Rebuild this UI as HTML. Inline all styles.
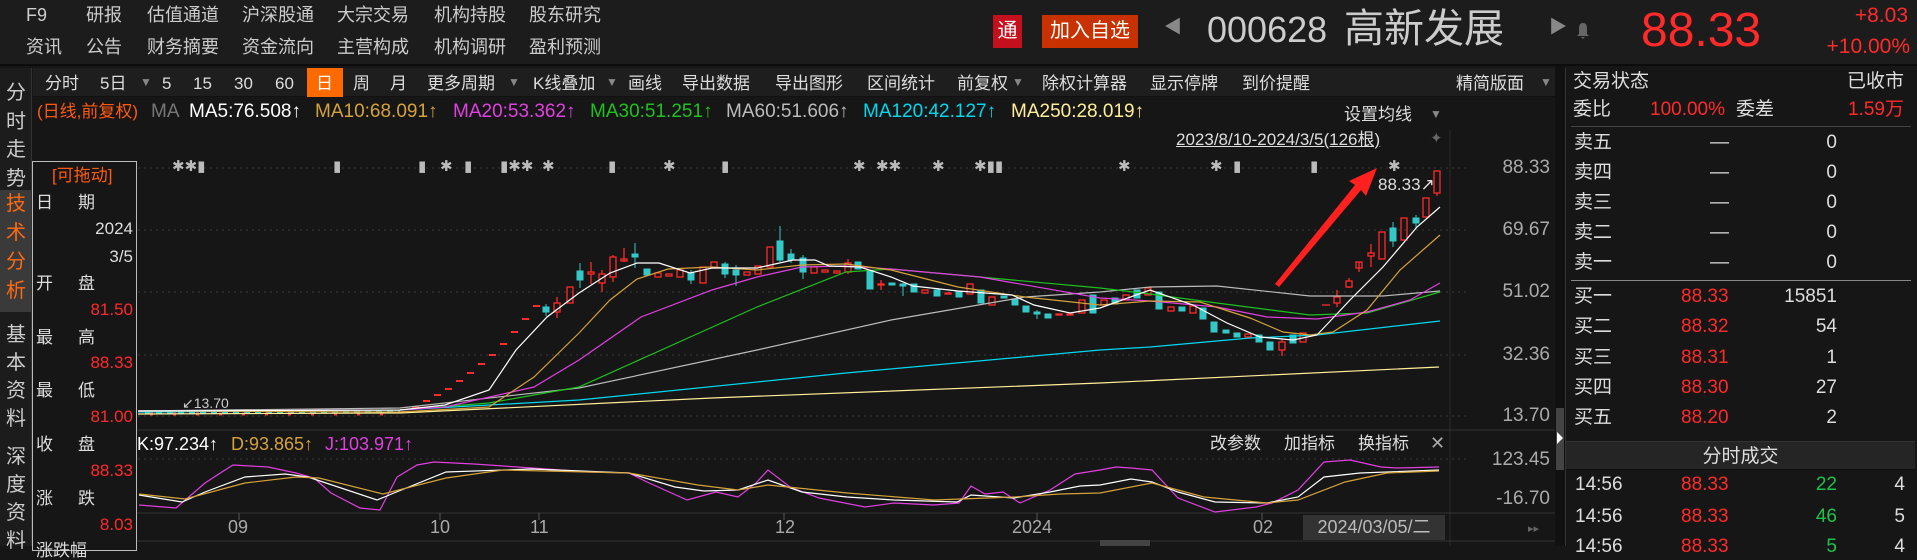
<!DOCTYPE html>
<html><head><meta charset="utf-8"><style>
*{margin:0;padding:0;box-sizing:border-box}
body{width:1917px;height:546px;background:#161616;overflow:hidden;position:relative;font-family:"Liberation Sans","Noto Sans CJK SC",sans-serif;color:#ddd}
.t{position:absolute;white-space:nowrap;line-height:1}
.r{color:#ff2a2a}.g{color:#1ec24a}.gr{color:#aaa}
svg{position:absolute;left:0;top:0}
.ma{font-size:19px;top:102px}
</style></head><body>
<!-- header -->
<div style="position:absolute;left:0;top:0;width:1917px;height:66px;background:#1c1c1c;border-bottom:2px solid #0c0c0c"></div>
<div class="t" style="left:26px;top:6px;font-size:18px;color:#ccc">F9</div>
<div class="t" style="left:86px;top:6px;font-size:18px;color:#ccc">研报</div>
<div class="t" style="left:147px;top:6px;font-size:18px;color:#ccc">估值通道</div>
<div class="t" style="left:242px;top:6px;font-size:18px;color:#ccc">沪深股通</div>
<div class="t" style="left:337px;top:6px;font-size:18px;color:#ccc">大宗交易</div>
<div class="t" style="left:434px;top:6px;font-size:18px;color:#ccc">机构持股</div>
<div class="t" style="left:529px;top:6px;font-size:18px;color:#ccc">股东研究</div>
<div class="t" style="left:26px;top:38px;font-size:18px;color:#ccc">资讯</div>
<div class="t" style="left:86px;top:38px;font-size:18px;color:#ccc">公告</div>
<div class="t" style="left:147px;top:38px;font-size:18px;color:#ccc">财务摘要</div>
<div class="t" style="left:242px;top:38px;font-size:18px;color:#ccc">资金流向</div>
<div class="t" style="left:337px;top:38px;font-size:18px;color:#ccc">主营构成</div>
<div class="t" style="left:434px;top:38px;font-size:18px;color:#ccc">机构调研</div>
<div class="t" style="left:529px;top:38px;font-size:18px;color:#ccc">盈利预测</div>
<div class="t" style="left:993px;top:15px;width:29px;height:33px;background:#c4101c;color:#fff;font-size:20px;line-height:33px;text-align:center">通</div>
<div class="t" style="left:1042px;top:15px;width:96px;height:33px;background:#c83200;color:#fff;font-size:20px;line-height:33px;text-align:center">加入自选</div>
<div class="t" style="left:1164px;top:18px;font-size:18px;color:#888">◀</div>
<div class="t" style="left:1207px;top:12px;font-size:36px;color:#ccc">000628</div>
<div class="t" style="left:1344px;top:9px;font-size:40px;color:#ccc">高新发展</div>
<div class="t" style="left:1549px;top:18px;font-size:18px;color:#888">▶</div>
<svg style="left:1576px;top:22px" width="14" height="18" viewBox="0 0 14 18"><path d="M7 1 C3 1 3 5 3 8 L3 12 L1 14 L13 14 L11 12 L11 8 C11 5 11 1 7 1Z M5 15 L9 15 L7 17Z" fill="#666"/></svg>
<div class="t r" style="left:1641px;top:7px;font-size:48px">88.33</div>
<div class="t r" style="left:1808px;top:5px;font-size:21px;width:100px;text-align:right">+8.03</div>
<div class="t r" style="left:1808px;top:36px;font-size:21px;width:102px;text-align:right">+10.00%</div>

<!-- sidebar -->
<div style="position:absolute;left:0;top:68px;width:32px;height:478px;background:#1c1c1c;border-right:1px solid #333"></div>
<div style="position:absolute;left:0;top:190px;width:31px;height:122px;background:#3a3a3a"></div>
<div class="t" style="left:6px;top:79px;font-size:20px;line-height:28.5px;width:20px;white-space:normal;color:#ccc">分时走势</div>
<div class="t" style="left:6px;top:190px;font-size:20px;line-height:29px;width:20px;white-space:normal;color:#ff6a10">技术分析</div>
<div class="t" style="left:6px;top:321px;font-size:20px;line-height:28px;width:20px;white-space:normal;color:#ccc">基本资料</div>
<div class="t" style="left:6px;top:443px;font-size:20px;line-height:28px;width:20px;white-space:normal;color:#ccc">深度资料</div>

<!-- toolbar -->
<div style="position:absolute;left:33px;top:68px;width:1522px;height:29px;background:#1e1e1e;border-bottom:1px solid #111"></div>
<div style="position:absolute;left:307px;top:68px;width:36px;height:29px;background:#ff6a00"></div>
<div class="t" style="left:45px;top:75px;font-size:17px">分时</div>
<div class="t" style="left:100px;top:75px;font-size:17px">5日</div>
<div class="t" style="left:140px;top:76px;font-size:12px;color:#888">▼</div>
<div class="t" style="left:162px;top:75px;font-size:17px">5</div>
<div class="t" style="left:193px;top:75px;font-size:17px">15</div>
<div class="t" style="left:234px;top:75px;font-size:17px">30</div>
<div class="t" style="left:275px;top:75px;font-size:17px">60</div>
<div class="t" style="left:316px;top:75px;font-size:17px;color:#fff">日</div>
<div class="t" style="left:353px;top:75px;font-size:17px">周</div>
<div class="t" style="left:390px;top:75px;font-size:17px">月</div>
<div class="t" style="left:427px;top:75px;font-size:17px">更多周期</div>
<div class="t" style="left:508px;top:76px;font-size:12px;color:#888">▼</div>
<div class="t" style="left:533px;top:75px;font-size:17px">K线叠加</div>
<div class="t" style="left:606px;top:76px;font-size:12px;color:#888">▼</div>
<div class="t" style="left:628px;top:75px;font-size:17px">画线</div>
<div class="t" style="left:682px;top:75px;font-size:17px">导出数据</div>
<div class="t" style="left:775px;top:75px;font-size:17px">导出图形</div>
<div class="t" style="left:867px;top:75px;font-size:17px">区间统计</div>
<div class="t" style="left:957px;top:75px;font-size:17px">前复权</div>
<div class="t" style="left:1012px;top:76px;font-size:12px;color:#888">▼</div>
<div class="t" style="left:1042px;top:75px;font-size:17px">除权计算器</div>
<div class="t" style="left:1150px;top:75px;font-size:17px">显示停牌</div>
<div class="t" style="left:1242px;top:75px;font-size:17px">到价提醒</div>
<div class="t" style="left:1456px;top:75px;font-size:17px">精简版面</div>
<div class="t" style="left:1540px;top:76px;font-size:12px;color:#888">▼</div>

<!-- MA line -->
<div class="t" style="left:37px;top:103px;font-size:17px;color:#ff5a10">(日线,前复权)</div>
<div class="t ma" style="left:151px;color:#777">MA</div>
<div class="t ma" style="left:189px;color:#fff">MA5:76.508↑</div>
<div class="t ma" style="left:315px;color:#d4a23a">MA10:68.091↑</div>
<div class="t ma" style="left:453px;color:#e040e0">MA20:53.362↑</div>
<div class="t ma" style="left:590px;color:#20c020">MA30:51.251↑</div>
<div class="t ma" style="left:726px;color:#bbb">MA60:51.606↑</div>
<div class="t ma" style="left:863px;color:#00d8f0">MA120:42.127↑</div>
<div class="t ma" style="left:1011px;color:#ffee99">MA250:28.019↑</div>
<div class="t" style="left:1344px;top:106px;font-size:17px">设置均线</div>
<div class="t" style="left:1430px;top:108px;font-size:12px;color:#888">▼</div>
<div class="t" style="left:1176px;top:131px;font-size:17px;text-decoration:underline">2023/8/10-2024/3/5(126根)</div>
<div class="t" style="left:1430px;top:131px;font-size:15px;color:#666">✦</div>

<svg width="1917" height="546">
<g stroke="#3a3a3a" stroke-dasharray="2,4">
<line x1="138" y1="168" x2="1470" y2="168"/><line x1="138" y1="230" x2="1470" y2="230"/><line x1="138" y1="292" x2="1470" y2="292"/><line x1="138" y1="355" x2="1470" y2="355"/><line x1="138" y1="416" x2="1470" y2="416"/><line x1="138" y1="459" x2="1470" y2="459"/>
</g>
<line x1="1450" y1="130" x2="1450" y2="546" stroke="#2a2a2a"/>
<line x1="33" y1="430" x2="1555" y2="430" stroke="#333"/>
<line x1="33" y1="513" x2="1555" y2="513" stroke="#333"/>
<line x1="33" y1="541" x2="1555" y2="541" stroke="#333"/>
<g stroke="#555"><line x1="239" y1="513" x2="239" y2="520"/><line x1="440" y1="513" x2="440" y2="520"/><line x1="539" y1="513" x2="539" y2="520"/><line x1="784" y1="513" x2="784" y2="520"/><line x1="1037" y1="513" x2="1037" y2="520"/><line x1="1262" y1="513" x2="1262" y2="520"/></g>
<!-- stars -->
<g fill="#bbb" font-size="15" font-weight="bold" font-family="DejaVu Sans">
<text x="172" y="171">✱✱▮</text><text x="333" y="171">▮</text><text x="418" y="171">▮</text><text x="440" y="171">✱</text><text x="464" y="171">▮</text><text x="500" y="171">▮✱✱</text><text x="542" y="171">✱</text><text x="608" y="171">▮</text><text x="663" y="171">✱</text><text x="721" y="171">▮</text><text x="853" y="171">✱</text><text x="876" y="171">✱✱</text><text x="932" y="171">✱</text><text x="974" y="171">✱▮▮</text><text x="1118" y="171">✱</text><text x="1210" y="171">✱</text><text x="1233" y="171">▮</text><text x="1310" y="171">▮</text><text x="1388" y="171">✱</text>
</g>
<g stroke-width="3">
<line x1="145" y1="412" x2="400" y2="412" stroke="#35c8c8" stroke-dasharray="6,5"/>
<line x1="150" y1="414" x2="400" y2="414" stroke="#ff3030" stroke-dasharray="3,20"/>
</g>
<text x="182" y="408" fill="#ccc" font-size="14" font-family="Liberation Sans">↙13.70</text>
<g stroke="#ff2a2a" stroke-width="2">
<line x1="401" y1="412" x2="408" y2="412"/><line x1="412" y1="407" x2="419" y2="407"/><line x1="423" y1="401" x2="430" y2="401"/><line x1="434" y1="395" x2="441" y2="395"/><line x1="445" y1="389" x2="452" y2="389"/><line x1="456" y1="381" x2="463" y2="381"/><line x1="467" y1="373" x2="474" y2="373"/><line x1="478" y1="364" x2="485" y2="364"/><line x1="489" y1="355" x2="496" y2="355"/><line x1="500" y1="344" x2="507" y2="344"/><line x1="511" y1="332" x2="518" y2="332"/><line x1="522" y1="319" x2="529" y2="319"/><line x1="533" y1="306" x2="540" y2="306"/>
</g>
<g fill="#35c8c8" stroke="#35c8c8">
<line x1="546" y1="304" x2="546" y2="316"/><rect x="543" y="307" width="6" height="5"/>
<line x1="580" y1="263" x2="580" y2="288"/><rect x="577" y="271" width="6" height="9"/>
<line x1="635" y1="243" x2="635" y2="268"/><rect x="632" y="254" width="6" height="3"/>
<rect x="644" y="269" width="6" height="6"/>
<line x1="691" y1="270" x2="691" y2="284"/><rect x="688" y="273" width="6" height="7"/>
<line x1="725" y1="262" x2="725" y2="278"/><rect x="722" y="264" width="6" height="10"/>
<line x1="736" y1="265" x2="736" y2="286"/><rect x="733" y="270" width="6" height="5"/>
<line x1="780" y1="226" x2="780" y2="262"/><rect x="777" y="241" width="6" height="19"/>
<line x1="791" y1="249" x2="791" y2="263"/><rect x="788" y="254" width="6" height="6"/>
<line x1="803" y1="255" x2="803" y2="279"/><rect x="800" y="258" width="6" height="14"/>
<rect x="855" y="262" width="6" height="7"/>
<rect x="867" y="271" width="6" height="18"/>
<rect x="889" y="283" width="6" height="2"/>
<line x1="903" y1="283" x2="903" y2="296"/><rect x="900" y="284" width="6" height="2"/>
<rect x="911" y="284" width="6" height="8"/>
<rect x="934" y="290" width="6" height="6"/>
<rect x="956" y="292" width="6" height="5"/>
<rect x="978" y="290" width="6" height="13"/>
<rect x="1001" y="296" width="6" height="2"/>
<rect x="1012" y="299" width="6" height="6"/>
<rect x="1023" y="306" width="6" height="6"/>
<line x1="1037" y1="310" x2="1037" y2="319"/><rect x="1034" y="312" width="6" height="2"/>
<rect x="1045" y="314" width="6" height="4"/>
<rect x="1090" y="295" width="6" height="18"/>
<rect x="1112" y="298" width="6" height="6"/>
<rect x="1134" y="290" width="6" height="8"/>
<rect x="1156" y="292" width="6" height="17"/>
<rect x="1179" y="307" width="6" height="4"/>
<rect x="1200" y="308" width="6" height="11"/>
<rect x="1211" y="322" width="6" height="10"/>
<rect x="1223" y="330" width="6" height="3"/>
<rect x="1234" y="333" width="6" height="4"/>
<rect x="1256" y="335" width="6" height="7"/>
<rect x="1267" y="342" width="6" height="8"/>
<rect x="1290" y="335" width="6" height="8"/>
<line x1="1393" y1="222" x2="1393" y2="247"/><rect x="1390" y="228" width="6" height="13"/>
<line x1="1416" y1="215" x2="1416" y2="228"/><rect x="1413" y="218" width="6" height="5"/>
</g>
<g fill="none" stroke="#ff2a2a" stroke-width="1.3">
<line x1="557" y1="297" x2="557" y2="318"/><rect x="554" y="303" width="6" height="9" fill="#161616"/>
<rect x="567" y="287" width="6" height="16"/>
<line x1="591" y1="262" x2="591" y2="284"/><rect x="588" y="272" width="6" height="2" fill="#161616"/>
<line x1="602" y1="270" x2="602" y2="292"/><rect x="599" y="274" width="6" height="9" fill="#161616"/>
<line x1="613" y1="255" x2="613" y2="282"/><rect x="610" y="257" width="6" height="20" fill="#161616"/>
<line x1="624" y1="248" x2="624" y2="262"/><rect x="621" y="259" width="6" height="2"/>
<rect x="655" y="273" width="6" height="4"/><rect x="666" y="274" width="6" height="2"/><rect x="677" y="270" width="6" height="7"/>
<rect x="700" y="267" width="6" height="16"/><rect x="711" y="262" width="6" height="6"/>
<rect x="744" y="272" width="6" height="3"/><rect x="755" y="266" width="6" height="8"/><rect x="767" y="247" width="6" height="20"/>
<rect x="811" y="267" width="6" height="6"/><rect x="822" y="270" width="6" height="2"/><rect x="834" y="271" width="6" height="2"/>
<line x1="848" y1="259" x2="848" y2="274"/><rect x="845" y="263" width="6" height="9" fill="#161616"/>
<line x1="881" y1="280" x2="881" y2="290"/><rect x="878" y="284" width="6" height="1"/>
<rect x="922" y="290" width="6" height="3"/><rect x="945" y="293" width="6" height="1"/><rect x="967" y="284" width="6" height="10"/>
<rect x="989" y="297" width="6" height="8"/><rect x="1056" y="314" width="6" height="1"/><rect x="1067" y="314" width="6" height="1"/>
<rect x="1079" y="300" width="6" height="13"/><rect x="1101" y="300" width="6" height="5"/><rect x="1123" y="295" width="6" height="5"/><rect x="1145" y="288" width="6" height="7"/>
<rect x="1168" y="307" width="6" height="4"/><rect x="1190" y="306" width="6" height="7"/><rect x="1245" y="334" width="6" height="3"/>
<line x1="1282" y1="338" x2="1282" y2="356"/><rect x="1279" y="342" width="6" height="8" fill="#161616"/>
<rect x="1300" y="333" width="6" height="9"/>
<line x1="1322" y1="305" x2="1330" y2="305"/>
<line x1="1337" y1="290" x2="1337" y2="307"/><rect x="1334" y="297" width="6" height="6" fill="#161616"/>
<line x1="1349" y1="278" x2="1349" y2="288"/><rect x="1346" y="281" width="6" height="6" fill="#161616"/>
<line x1="1359" y1="262" x2="1359" y2="272"/><rect x="1356" y="262" width="6" height="6"/>
<line x1="1371" y1="244" x2="1371" y2="267"/><rect x="1368" y="253" width="6" height="3" fill="#161616"/>
<rect x="1379" y="232" width="6" height="27"/><rect x="1401" y="218" width="6" height="22"/><rect x="1423" y="198" width="6" height="19"/>
<line x1="1437" y1="193" x2="1437" y2="196"/><rect x="1434" y="171" width="6" height="22"/>
</g>
<g fill="none" stroke-width="1.2">
<polyline stroke="#ffef99" points="138,414 400,413 712,398 1100,383 1439,367"/>
<polyline stroke="#00d8f0" points="138,412 400,410 579,400 846,373 1100,350 1150,347 1250,338 1317,335 1440,321"/>
<polyline stroke="#bbbbbb" points="138,411 400,408 579,388 757,350 891,320 1025,297 1100,292 1150,287 1217,286 1310,296 1383,296 1440,291"/>
<polyline stroke="#20c020" points="138,411 400,410 489,403 579,387 668,347 757,307 846,272 891,269 980,277 1100,288 1150,294 1217,303 1310,315 1367,313 1440,292"/>
<polyline stroke="#e040e0" points="138,411 400,410 445,407 534,387 579,360 641,317 712,290 757,277 802,267 846,266 891,269 980,277 1100,298 1150,301 1217,307 1267,317 1317,319 1367,312 1410,300 1440,283"/>
<polyline stroke="#d4a23a" points="138,411 400,412 489,407 534,377 579,333 610,300 637,279 668,269 712,267 757,270 802,265 846,264 891,270 958,287 1025,297 1100,305 1150,301 1200,302 1250,318 1283,332 1310,335 1333,332 1367,310 1400,270 1440,235"/>
<polyline stroke="#ffffff" points="138,411 400,410 445,405 489,390 516,350 547,317 579,293 610,273 637,263 659,263 690,273 712,268 757,268 793,260 815,260 829,266 860,267 891,277 913,286 958,291 1012,295 1034,305 1070,313 1100,308 1150,290 1193,305 1227,323 1260,337 1293,340 1317,335 1350,300 1383,267 1417,227 1440,207"/>
</g>
<polygon fill="#ff2020" points="1275,284 1355,185 1349,181 1377,168 1366,196 1361,190 1279,287"/>
<text x="1378" y="190" fill="#ddd" font-size="17" font-family="Liberation Sans">88.33↗</text>
<g fill="none" stroke-width="1.2">
<polyline stroke="#e040e0" points="139,505 176,508 205,483 225,470 233,465 268,467 296,473 314,478 331,493 360,508 380,510 397,477 417,465 434,462 474,464 532,468 589,472 629,473 647,482 687,500 716,492 738,497 756,483 768,470 790,487 819,498 865,507 894,503 934,505 959,503 971,486 985,494 1003,492 1020,503 1050,490 1075,474 1100,470 1116,467 1131,468 1152,470 1178,498 1215,512 1256,507 1272,503 1298,490 1324,462 1350,460 1381,467 1397,468 1439,467"/>
<polyline stroke="#ffffff" points="139,495 182,502 205,492 245,477 285,474 308,477 377,500 394,493 446,472 532,469 629,473 675,487 704,491 738,490 768,480 802,492 847,497 894,500 957,502 971,495 1014,498 1050,492 1080,486 1100,485 1131,479 1152,482 1178,492 1215,502 1267,503 1298,497 1324,477 1360,473 1439,470"/>
<polyline stroke="#d4a23a" points="139,494 185,499 245,483 296,477 319,478 383,494 446,478 503,470 629,473 698,485 738,490 768,485 847,493 934,500 1014,497 1060,494 1100,493 1152,483 1204,497 1267,503 1298,500 1345,482 1387,473 1439,471"/>
</g>
<rect x="1555" y="66" width="10" height="480" fill="#111"/>
<rect x="1556" y="408" width="8" height="62" fill="#444"/>
<polygon points="1557,432 1563,438 1557,444" fill="#fff"/>
<rect x="1100" y="540" width="50" height="6" fill="#444"/>
<text x="1528" y="532" fill="#666" font-size="11">▸▸</text>
</svg>

<div class="t gr" style="left:1480px;top:158px;width:70px;text-align:right;font-size:19px">88.33</div>
<div class="t gr" style="left:1480px;top:220px;width:70px;text-align:right;font-size:19px">69.67</div>
<div class="t gr" style="left:1480px;top:282px;width:70px;text-align:right;font-size:19px">51.02</div>
<div class="t gr" style="left:1480px;top:345px;width:70px;text-align:right;font-size:19px">32.36</div>
<div class="t gr" style="left:1480px;top:406px;width:70px;text-align:right;font-size:19px">13.70</div>
<div class="t gr" style="left:1480px;top:450px;width:70px;text-align:right;font-size:19px">123.45</div>
<div class="t gr" style="left:1480px;top:489px;width:70px;text-align:right;font-size:19px">-16.70</div>
<div class="t" style="left:137px;top:435px;font-size:18px;color:#fff">K:97.234↑</div>
<div class="t" style="left:231px;top:435px;font-size:18px;color:#d4a23a">D:93.865↑</div>
<div class="t" style="left:325px;top:435px;font-size:18px;color:#e040e0">J:103.971↑</div>
<div class="t" style="left:1210px;top:435px;font-size:17px">改参数</div>
<div class="t" style="left:1284px;top:435px;font-size:17px">加指标</div>
<div class="t" style="left:1358px;top:435px;font-size:17px">换指标</div>
<div class="t" style="left:1430px;top:434px;font-size:18px;color:#aaa">✕</div>
<div class="t gr" style="left:228px;top:518px;font-size:18px">09</div>
<div class="t gr" style="left:430px;top:518px;font-size:18px">10</div>
<div class="t gr" style="left:530px;top:518px;font-size:18px">11</div>
<div class="t gr" style="left:775px;top:518px;font-size:18px">12</div>
<div class="t gr" style="left:1012px;top:518px;font-size:18px">2024</div>
<div class="t gr" style="left:1253px;top:518px;font-size:18px">02</div>
<div class="t" style="left:1303px;top:515px;width:142px;height:25px;background:#333;color:#bbb;font-size:18px;line-height:25px;text-align:center">2024/03/05/二</div>

<div style="position:absolute;left:32px;top:161px;width:105px;height:390px;background:#161616;border:1px solid #bbb"></div>
<div class="t" style="left:52px;top:167px;font-size:17px;color:#ff5a10">[可拖动]</div>
<div class="t" style="left:36px;top:194px;font-size:17px">日</div><div class="t" style="left:78px;top:194px;font-size:17px">期</div>
<div class="t" style="left:36px;top:220px;width:97px;text-align:right;font-size:17px">2024</div>
<div class="t" style="left:36px;top:248px;width:97px;text-align:right;font-size:17px">3/5</div>
<div class="t" style="left:36px;top:275px;font-size:17px">开</div><div class="t" style="left:78px;top:275px;font-size:17px">盘</div>
<div class="t r" style="left:36px;top:301px;width:97px;text-align:right;font-size:17px">81.50</div>
<div class="t" style="left:36px;top:329px;font-size:17px">最</div><div class="t" style="left:78px;top:329px;font-size:17px">高</div>
<div class="t r" style="left:36px;top:354px;width:97px;text-align:right;font-size:17px">88.33</div>
<div class="t" style="left:36px;top:382px;font-size:17px">最</div><div class="t" style="left:78px;top:382px;font-size:17px">低</div>
<div class="t r" style="left:36px;top:408px;width:97px;text-align:right;font-size:17px">81.00</div>
<div class="t" style="left:36px;top:436px;font-size:17px">收</div><div class="t" style="left:78px;top:436px;font-size:17px">盘</div>
<div class="t r" style="left:36px;top:462px;width:97px;text-align:right;font-size:17px">88.33</div>
<div class="t" style="left:36px;top:490px;font-size:17px">涨</div><div class="t" style="left:78px;top:490px;font-size:17px">跌</div>
<div class="t r" style="left:36px;top:516px;width:97px;text-align:right;font-size:17px">8.03</div>
<div class="t" style="left:36px;top:542px;font-size:17px">涨跌幅</div>

<div style="position:absolute;left:1565px;top:68px;width:352px;height:478px;background:#161616;border-left:1px solid #333"></div>
<div class="t" style="left:1573px;top:72px;font-size:19px">交易状态</div>
<div class="t" style="left:1800px;top:72px;width:104px;text-align:right;font-size:19px">已收市</div>
<div class="t" style="left:1573px;top:100px;font-size:19px">委比</div>
<div class="t r" style="left:1650px;top:100px;font-size:19px">100.00%</div>
<div class="t" style="left:1736px;top:100px;font-size:19px">委差</div>
<div class="t r" style="left:1800px;top:100px;width:104px;text-align:right;font-size:19px">1.59万</div>
<div style="position:absolute;left:1571px;top:126px;width:340px;height:1px;background:#444"></div>
<div style="position:absolute;left:1571px;top:280px;width:340px;height:1px;background:#888"></div>

<div class="t" style="left:1574px;top:133px;font-size:19px">卖五</div><div class="t" style="left:1710px;top:133px;font-size:19px">—</div><div class="t" style="left:1780px;top:133px;width:57px;text-align:right;font-size:19px">0</div>
<div class="t" style="left:1574px;top:163px;font-size:19px">卖四</div><div class="t" style="left:1710px;top:163px;font-size:19px">—</div><div class="t" style="left:1780px;top:163px;width:57px;text-align:right;font-size:19px">0</div>
<div class="t" style="left:1574px;top:193px;font-size:19px">卖三</div><div class="t" style="left:1710px;top:193px;font-size:19px">—</div><div class="t" style="left:1780px;top:193px;width:57px;text-align:right;font-size:19px">0</div>
<div class="t" style="left:1574px;top:223px;font-size:19px">卖二</div><div class="t" style="left:1710px;top:223px;font-size:19px">—</div><div class="t" style="left:1780px;top:223px;width:57px;text-align:right;font-size:19px">0</div>
<div class="t" style="left:1574px;top:253px;font-size:19px">卖一</div><div class="t" style="left:1710px;top:253px;font-size:19px">—</div><div class="t" style="left:1780px;top:253px;width:57px;text-align:right;font-size:19px">0</div>

<div class="t" style="left:1574px;top:287px;font-size:19px">买一</div><div class="t r" style="left:1681px;top:287px;font-size:19px">88.33</div><div class="t" style="left:1760px;top:287px;width:77px;text-align:right;font-size:19px">15851</div>
<div class="t" style="left:1574px;top:317px;font-size:19px">买二</div><div class="t r" style="left:1681px;top:317px;font-size:19px">88.32</div><div class="t" style="left:1760px;top:317px;width:77px;text-align:right;font-size:19px">54</div>
<div class="t" style="left:1574px;top:348px;font-size:19px">买三</div><div class="t r" style="left:1681px;top:348px;font-size:19px">88.31</div><div class="t" style="left:1760px;top:348px;width:77px;text-align:right;font-size:19px">1</div>
<div class="t" style="left:1574px;top:378px;font-size:19px">买四</div><div class="t r" style="left:1681px;top:378px;font-size:19px">88.30</div><div class="t" style="left:1760px;top:378px;width:77px;text-align:right;font-size:19px">27</div>
<div class="t" style="left:1574px;top:408px;font-size:19px">买五</div><div class="t r" style="left:1681px;top:408px;font-size:19px">88.20</div><div class="t" style="left:1760px;top:408px;width:77px;text-align:right;font-size:19px">2</div>

<div class="t" style="left:1566px;top:441px;width:349px;height:29px;background:#252525;border-top:1px solid #333;border-bottom:1px solid #0e0e0e;font-size:19px;line-height:29px;text-align:center">分时成交</div>
<div class="t" style="left:1575px;top:475px;font-size:19px">14:56</div><div class="t r" style="left:1681px;top:475px;font-size:19px">88.33</div><div class="t g" style="left:1760px;top:475px;width:77px;text-align:right;font-size:19px">22</div><div class="t" style="left:1860px;top:475px;width:45px;text-align:right;font-size:19px">4</div>
<div class="t" style="left:1575px;top:507px;font-size:19px">14:56</div><div class="t r" style="left:1681px;top:507px;font-size:19px">88.33</div><div class="t g" style="left:1760px;top:507px;width:77px;text-align:right;font-size:19px">46</div><div class="t" style="left:1860px;top:507px;width:45px;text-align:right;font-size:19px">5</div>
<div class="t" style="left:1575px;top:537px;font-size:19px">14:56</div><div class="t r" style="left:1681px;top:537px;font-size:19px">88.33</div><div class="t g" style="left:1760px;top:537px;width:77px;text-align:right;font-size:19px">5</div><div class="t" style="left:1860px;top:537px;width:45px;text-align:right;font-size:19px">4</div>
</body></html>
